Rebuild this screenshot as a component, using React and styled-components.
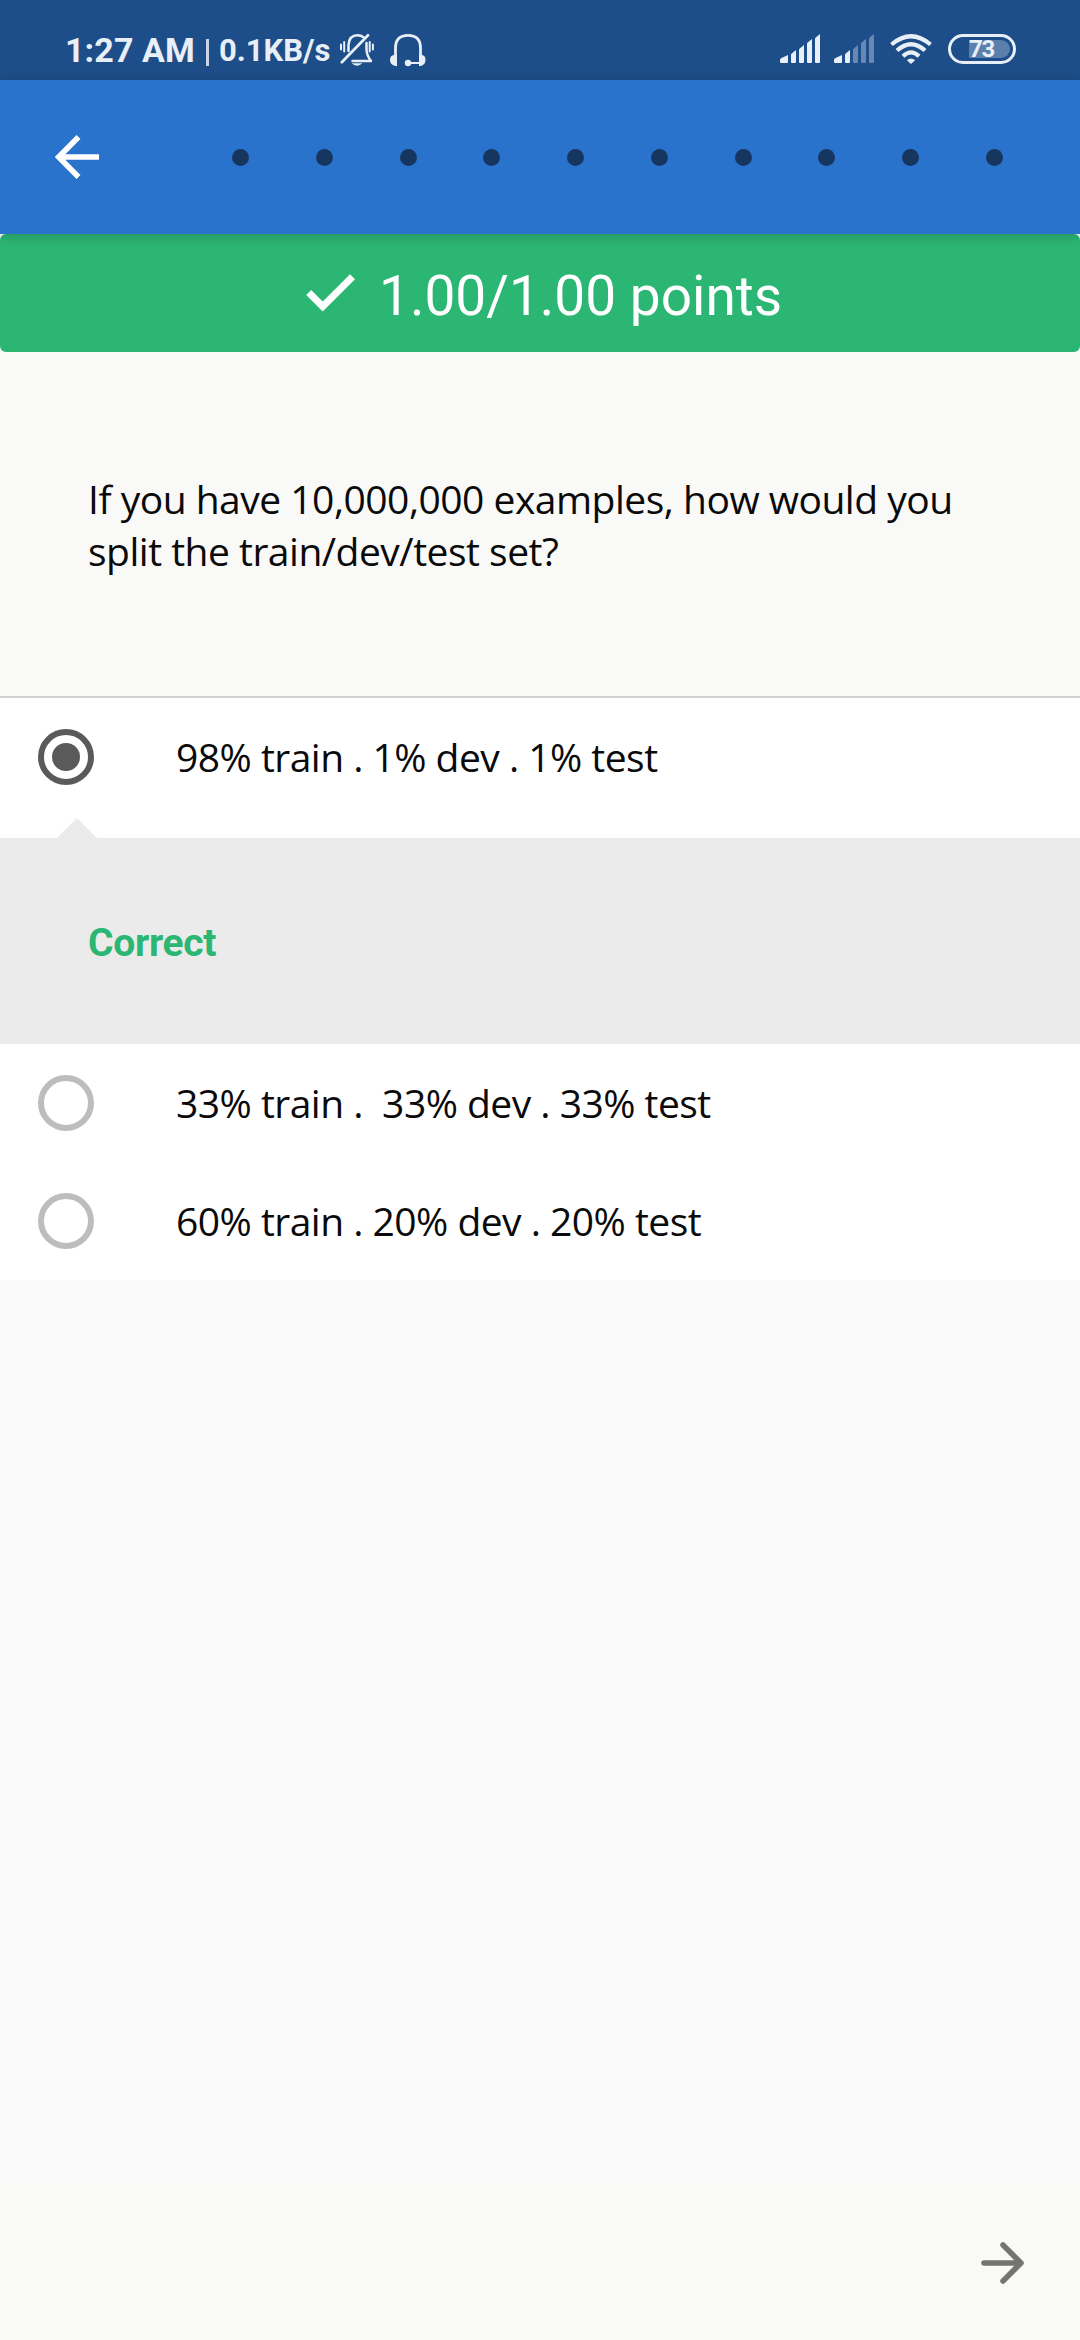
import React from "react";
import styled, { createGlobalStyle } from "styled-components";

const GlobalStyle = createGlobalStyle`
  *, *::before, *::after { box-sizing: border-box; }
  html, body { margin: 0; padding: 0; background: #fafafa; }
`;

const Screen = styled.div`
  width: 1080px;
  height: 2340px;
  display: flex;
  flex-direction: column;
  background: #fafafa;
  font-family: Roboto, sans-serif;
  overflow: hidden;
`;

const StatusBar = styled.header`
  height: 80px;
  flex: none;
  display: flex;
  align-items: flex-start;
  justify-content: space-between;
  padding: 0 64px 0 65px;
  background: #1d4e89;
  color: #e9eff7;
`;

const StatusGroup = styled.div`
  display: flex;
  align-items: flex-start;
`;

const Clock = styled.span`
  width: 130px;
  font-size: 34px;
  line-height: 40px;
  font-weight: 700;
  letter-spacing: 0.1px;
  margin-top: 30px;
  white-space: nowrap;
`;

const Separator = styled.span`
  width: 3px;
  height: 27px;
  margin: 39px 10px 0 11px;
  background: #c9d6e6;
`;

const NetSpeed = styled.span`
  width: 113px;
  font-size: 31px;
  line-height: 36px;
  font-weight: 700;
  margin-top: 33px;
  white-space: nowrap;
`;

const Glyph = styled.svg`
  display: block;
  flex: none;
  width: ${(p) => p.$w}px;
  height: ${(p) => p.$h}px;
  margin-top: ${(p) => p.$top || 0}px;
  margin-left: ${(p) => p.$left || 0}px;
`;

const Battery = styled.div`
  width: 68px;
  height: 30px;
  margin: 34px 0 0 16px;
  padding: 3px;
  border: 3px solid #e9eff7;
  border-radius: 15px;
`;

const BatteryLevel = styled.div`
  width: 41px;
  height: 18px;
  margin-left: 15px;
  border-radius: 0 9px 9px 0;
  background: #5b80ac;
  font-size: 24px;
  line-height: 19px;
  font-weight: 700;
  letter-spacing: -1.3px;
`;

const AppBar = styled.nav`
  position: relative;
  z-index: 1;
  height: 154px;
  flex: none;
  display: flex;
  align-items: center;
  padding-left: 55px;
  background: #2a73cc;
  box-shadow: 0 2px 12px rgba(0, 0, 0, 0.22);
`;

const BackButton = styled.button`
  display: flex;
  width: 44px;
  padding: 0;
  border: 0;
  background: none;
`;

const Steps = styled.div`
  display: flex;
  gap: 66.75px;
  margin-left: 133px;
  padding-top: 1px;
`;

const Step = styled.span`
  width: 17px;
  height: 17px;
  border-radius: 50%;
  background: #17365f;
`;

const ScoreBanner = styled.section`
  height: 118px;
  flex: none;
  display: flex;
  align-items: center;
  padding: 0 0 0 306px;
  border-radius: 6px;
  background: #2cb673;
  color: #fff;
`;

const Score = styled.span`
  margin-left: 24px;
  padding-top: 6px;
  font-size: 55px;
  line-height: 64px;
  white-space: nowrap;
`;

const Question = styled.section`
  height: 346px;
  padding: 121px 88px 0;
  flex: none;
  background: #f9f9f7;
  border-bottom: 2px solid #d2d2d4;
  font-family: "Open Sans", sans-serif;
  font-size: 39px;
  line-height: 52px;
  letter-spacing: -0.5px;
  color: #0a0a0a;
`;

const Option = styled.label`
  height: ${(p) => (p.$withFeedback ? 140 : 118)}px;
  flex: none;
  display: flex;
  align-items: flex-start;
  padding: 31px 38px 0;
  background: #fff;
`;

const Radio = styled.span`
  width: 56px;
  height: 56px;
  flex: none;
  display: grid;
  place-items: center;
  border: 6px solid ${(p) => (p.$checked ? "#5a5a5a" : "#bdbdbd")};
  border-radius: 50%;
  &::after {
    content: "";
    width: 28px;
    height: 28px;
    border-radius: 50%;
    background: ${(p) => (p.$checked ? "#5a5a5a" : "transparent")};
  }
`;

const OptionText = styled.span`
  margin-left: 82px;
  font-family: "Open Sans", sans-serif;
  font-size: 39px;
  line-height: 56px;
  letter-spacing: -0.52px;
  color: #0a0a0a;
  white-space: pre;
`;

const Feedback = styled.section`
  position: relative;
  height: 206px;
  flex: none;
  padding: 82px 88px 0;
  background: #ebebeb;
  color: #2cb673;
  font-size: 39px;
  line-height: 46px;
  font-weight: 700;
  letter-spacing: -0.3px;
  &::before {
    content: "";
    position: absolute;
    left: 57px;
    top: -20px;
    border: 20px solid transparent;
    border-top: 0;
    border-bottom-color: #ebebeb;
  }
`;

const Footer = styled.footer`
  height: 155px;
  flex: none;
  margin-top: auto;
  display: flex;
  justify-content: flex-end;
  padding: 56px 55px 0 0;
  background: #f9f9f7;
`;

const BARS = [
  { x: 0, y: 21 },
  { x: 11, y: 16 },
  { x: 19, y: 11 },
  { x: 27, y: 5 },
  { x: 35, y: 0 },
];

function Signal({ level, left }) {
  return (
    <Glyph $w={40} $h={30} $top={34} $left={left} viewBox="0 0 40 30">
      {BARS.map((b, i) => {
        const w = i === 0 ? 8 : 5;
        return (
          <path
            key={i}
            d={`M${b.x} ${b.y + 5}Q${b.x} ${b.y + 4} ${b.x + 1} ${b.y + 3.3}L${b.x + w} ${b.y}V28Q${b.x + w} 29 ${b.x + w - 1} 29H${b.x + 1}Q${b.x} 29 ${b.x} 28Z`}
            fill={i < level ? "#e9eff7" : "#6688b3"}
          />
        );
      })}
    </Glyph>
  );
}

function BellOff() {
  return (
    <Glyph $w={34} $h={34} $top={33} $left={8} viewBox="0 0 34 34" fill="none" stroke="#e9eff7" strokeWidth="2.5" strokeLinecap="round">
      <path d="M8.5 18V12Q9 2.200 17.500 2.200Q21 2.200 23.500 4.200" />
      <path d="M26.500 10V17Q27 23 31 28H12.500" strokeLinejoin="round" />
      <path d="M1.800 29.200L28 2.300" strokeWidth="2.700" />
      <path d="M1 11.500V16.500M4.200 9V18.500M29.700 9V18.500M32.900 11.500V16.500" strokeWidth="2" />
      <path d="M11.500 30.300H22.500Q17 35 11.500 30.300Z" fill="#e9eff7" stroke="none" />
    </Glyph>
  );
}

function Headset() {
  return (
    <Glyph $w={36} $h={34} $top={33} $left={16} viewBox="0 0 36 34" fill="none" stroke="#e9eff7" strokeWidth="2.800">
      <path d="M5.500 31V15Q5.500 2.300 18 2.300Q30.500 2.300 30.500 15V31" />
      <path d="M18 30H31" strokeWidth="2" />
      <path d="M7 22V33H5Q0 31.500 0 27Q0 22.500 4 22ZM29 22V33H31Q35.500 31.500 35.500 27Q35.500 22.500 32 22Z" fill="#e9eff7" stroke="none" />
      <circle cx="18" cy="30" r="3.200" fill="#e9eff7" stroke="none" />
    </Glyph>
  );
}

function Wifi() {
  return (
    <Glyph $w={42} $h={31} $top={33} $left={16} viewBox="0.5 0 42 31" fill="none" stroke="#e9eff7" strokeWidth="4.200">
      <path d="M2 11.500Q21.500 -5 41 11.500" />
      <path d="M7.500 17.500Q21.500 5 35.500 17.500" />
      <path d="M13.500 23.200Q21.500 15.500 29.500 23.200" />
      <path d="M21.500 31L17.400 27.300Q21.500 23.500 25.600 27.300Z" fill="#e9eff7" stroke="none" />
    </Glyph>
  );
}

export default function App() {
  return (
    <Screen>
      <GlobalStyle />
      <StatusBar>
        <StatusGroup>
          <Clock>1:27 AM</Clock>
          <Separator />
          <NetSpeed>0.1KB/s</NetSpeed>
          <BellOff />
          <Headset />
        </StatusGroup>
        <StatusGroup>
          <Signal level={5} left={0} />
          <Signal level={2} left={14} />
          <Wifi />
          <Battery>
            <BatteryLevel>73</BatteryLevel>
          </Battery>
        </StatusGroup>
      </StatusBar>

      <AppBar>
        <BackButton aria-label="Back">
          <Glyph $w={44} $h={44} viewBox="0 0 44 44" fill="none" stroke="#fff" strokeWidth="5.500">
            <path d="M44 22H5M23.500 2L3.700 22L23.500 42" />
          </Glyph>
        </BackButton>
        <Steps>
          {Array.from({ length: 10 }, (_, i) => (
            <Step key={i} />
          ))}
        </Steps>
      </AppBar>

      <ScoreBanner>
        <Glyph $w={49} $h={38} viewBox="0 0 49 38" fill="none" stroke="#fff" strokeWidth="7">
          <path d="M2.700 18.500L16.700 32.500L46.500 2.700" />
        </Glyph>
        <Score>1.00/1.00 points</Score>
      </ScoreBanner>

      <Question>If you have 10,000,000 examples, how would you split the train/dev/test set?</Question>

      <Option $withFeedback>
        <Radio $checked />
        <OptionText>98% train . 1% dev . 1% test</OptionText>
      </Option>
      <Feedback>Correct</Feedback>
      <Option>
        <Radio />
        <OptionText>{"33% train .  33% dev . 33% test"}</OptionText>
      </Option>
      <Option>
        <Radio />
        <OptionText>60% train . 20% dev . 20% test</OptionText>
      </Option>

      <Footer>
        <Glyph $w={45} $h={44} viewBox="0 0 45 44" fill="none" stroke="#747472" strokeWidth="5.500" strokeLinecap="round" strokeLinejoin="round">
          <path d="M4 22H40M23 4L41 22L23 40" />
        </Glyph>
      </Footer>
    </Screen>
  );
}
